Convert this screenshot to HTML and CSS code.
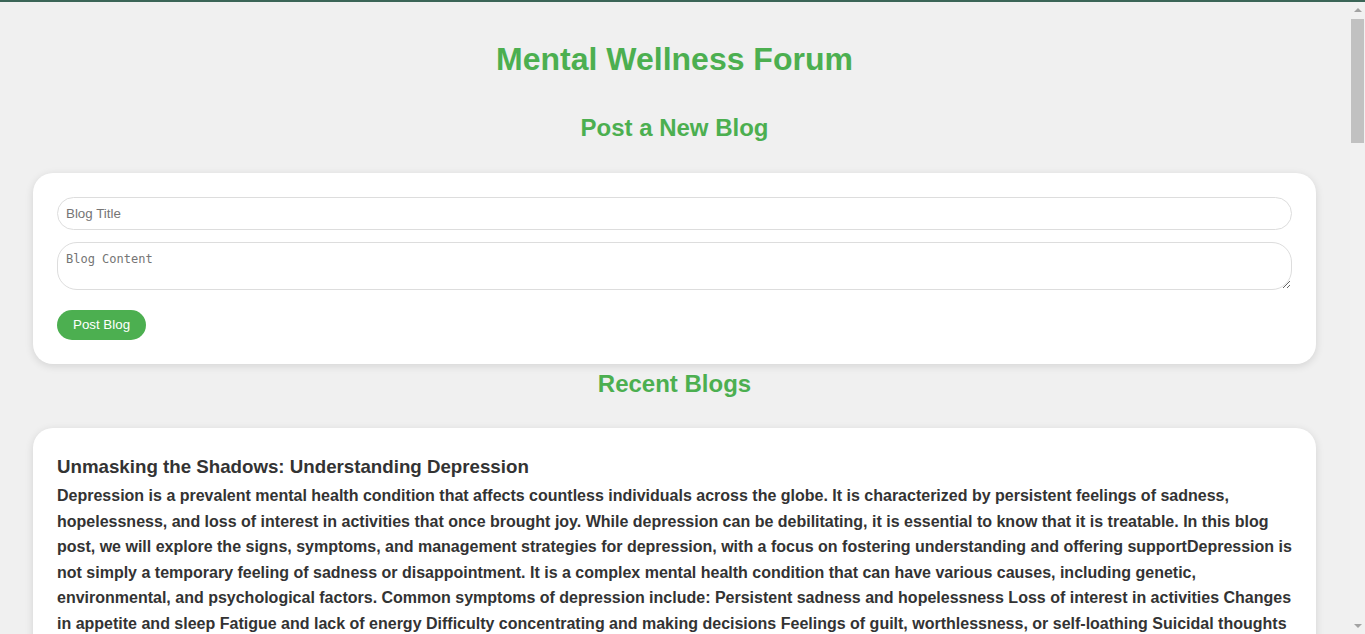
FILE: index.html
```html
<!DOCTYPE html>
<html lang="en">
<head>
<meta charset="utf-8">
<title>Mental Wellness Forum</title>
<link rel="stylesheet" href="styles.css">
</head>
<body>
<div class="topline"></div>
<div class="frame">
  <main class="page">
    <h1 class="title">Mental Wellness Forum</h1>
    <h2 class="section-title">Post a New Blog</h2>
    <form class="card post-form">
      <input class="field" type="text" placeholder="Blog Title">
      <textarea class="field area" placeholder="Blog Content"></textarea>
      <button class="btn" type="button">Post Blog</button>
    </form>
    <h2 class="section-title">Recent Blogs</h2>
    <article class="card blog">
      <h3 class="blog-title">Unmasking the Shadows: Understanding Depression</h3>
      <p class="blog-body">Depression is a prevalent mental health condition that affects countless individuals across the globe. It is characterized by persistent feelings of sadness, hopelessness, and loss of interest in activities that once brought joy. While depression can be debilitating, it is essential to know that it is treatable. In this blog post, we will explore the signs, symptoms, and management strategies for depression, with a focus on fostering understanding and offering supportDepression is not simply a temporary feeling of sadness or disappointment. It is a complex mental health condition that can have various causes, including genetic, environmental, and psychological factors. Common symptoms of depression include: Persistent sadness and hopelessness Loss of interest in activities Changes in appetite and sleep Fatigue and lack of energy Difficulty concentrating and making decisions Feelings of guilt, worthlessness, or self-loathing Suicidal thoughts or tendencies Seeking professional help is a crucial step toward recovery. Therapy, medication, lifestyle changes, and a strong support network can all play a role in managing depression. Remember, you are not alone, and help is available.</p>
    </article>
  </main>
  <div class="scrollbar" aria-hidden="true">
    <div class="arrow arrow-up"></div>
    <div class="thumb"></div>
    <div class="track"></div>
    <div class="arrow arrow-down"></div>
  </div>
</div>
</body>
</html>
```
FILE: styles.css
```css
html, body {
  margin: 0;
  padding: 0;
  height: 100%;
  overflow: hidden;
}
body {
  display: flex;
  flex-direction: column;
  background: #f0f0f0;
  font-family: "Liberation Sans", Arial, sans-serif;
  line-height: 1.6;
  color: #333;
}
.topline {
  flex: 0 0 2px;
  background: #3b6557;
}
.frame {
  flex: 1;
  display: flex;
  min-height: 0;
}
.page {
  flex: 1;
  min-width: 0;
  overflow: hidden;
  padding: 0 34px 40px 33px;
}
.scrollbar {
  flex: 0 0 15px;
  display: flex;
  flex-direction: column;
  align-items: center;
  background: #f1f1f1;
}
.arrow {
  flex: 0 0 auto;
  width: 0;
  height: 0;
  border-left: 4px solid transparent;
  border-right: 4px solid transparent;
}
.arrow-up {
  margin: 6px 0 7px;
  border-bottom: 4px solid #a3a3a3;
}
.arrow-down {
  margin: 7px 0 6px;
  border-top: 4px solid #a3a3a3;
}
.thumb {
  flex: 0 0 124px;
  width: 13px;
  background: #c1c1c1;
}
.track {
  flex: 1;
}
.title {
  margin: 32px 0 23px;
  font-size: 32px;
  color: #4caf50;
  text-align: center;
}
.section-title {
  margin: 0 0 25px;
  padding-top: 1px;
  font-size: 24px;
  color: #4caf50;
  text-align: center;
}
.card {
  background: #fff;
  border-radius: 20px;
  box-shadow: 0 2px 8px rgba(0, 0, 0, 0.12);
  padding: 24px;
}
.post-form {
  display: flex;
  flex-direction: column;
  align-items: flex-start;
}
.field {
  box-sizing: border-box;
  width: 100%;
  margin: 0 0 12px;
  padding: 8px;
  border: 1px solid #ddd;
  border-radius: 20px;
  font-family: "Liberation Sans", Arial, sans-serif;
  font-size: 13.33px;
  line-height: normal;
  color: #333;
  background: #fff;
  outline: none;
}
.field::placeholder {
  color: #757575;
}
.area {
  height: 48px;
  margin-bottom: 20px;
  padding: 9px 8px 7px;
  font-family: "DejaVu Sans Mono", monospace;
  font-size: 12px;
  resize: vertical;
}
.btn {
  height: 30px;
  padding: 0 16px;
  border: none;
  border-radius: 16px;
  background: #4caf50;
  color: #fff;
  font-family: "Liberation Sans", Arial, sans-serif;
  font-size: 13.33px;
  cursor: pointer;
}
.blog {
  padding-top: 24px;
  margin-bottom: 20px;
}
.blog-title {
  margin: 0 0 1px;
  font-size: 18.72px;
  color: #333;
}
.blog-body {
  margin: 0;
  font-size: 16px;
  font-weight: bold;
  color: #333;
}
```
